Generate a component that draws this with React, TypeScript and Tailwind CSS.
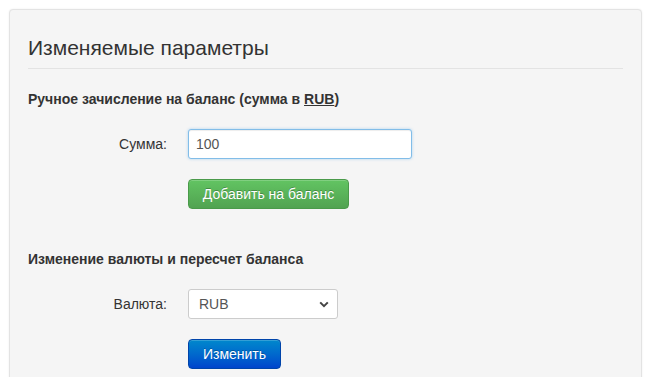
import { useState } from 'react';

function Chevron() {
  return (
    <svg width="10" height="7" viewBox="0 0 10 7" className="pointer-events-none absolute right-[9px] top-[12px]">
      <path d="M1.2 1.4 5 5.2 8.8 1.4" fill="none" stroke="#444" strokeWidth="2" />
    </svg>
  );
}

export default function App() {
  const [amount, setAmount] = useState('100');
  const [currency, setCurrency] = useState('RUB');

  return (
    <div className="h-screen overflow-hidden bg-white p-[9px] font-['Liberation_Sans',Arial,sans-serif] text-[14px] text-[#333]">
      <div className="h-[400px] rounded-[4px] border border-[#e3e3e3] bg-[#f5f5f5] px-[18px] pt-[18px] shadow-[0_0_2px_rgba(0,0,0,0.08)]">
        <h2 className="mt-[5px] text-[21px] leading-[30px] text-[#333]">Изменяемые параметры</h2>
        <div className="mt-[5px] h-px bg-[#e3e3e3]" />

        <h4 className="mt-[20px] text-[14px] font-bold leading-[20px]">
          Ручное зачисление на баланс (сумма в <span className="underline">RUB</span>)
        </h4>

        <div className="mt-[20px] flex items-center">
          <label className="w-[139px] text-right">Сумма:</label>
          <input
            value={amount}
            onChange={(e) => setAmount(e.target.value)}
            className="ml-[21px] h-[30px] w-[224px] rounded-[3px] border border-[#82bde8] bg-white px-[7px] text-[14px] text-[#555] shadow-[inset_0_1px_1px_rgba(0,0,0,0.075),0_0_3px_rgba(82,168,236,0.45)] outline-none"
          />
        </div>
        <div className="ml-[160px] mt-[20px]">
          <button className="h-[30px] w-[161px] rounded-[4px] border border-[#4a9a4a] bg-gradient-to-b from-[#62c462] to-[#51a351] text-[14px] text-white shadow-[inset_0_1px_0_rgba(255,255,255,0.2)] [text-shadow:0_-1px_0_rgba(0,0,0,0.25)]">
            Добавить на баланс
          </button>
        </div>

        <h4 className="mt-[40px] text-[14px] font-bold leading-[20px]">Изменение валюты и пересчет баланса</h4>

        <div className="mt-[20px] flex items-center">
          <label className="w-[139px] text-right">Валюта:</label>
          <div className="relative ml-[21px]">
            <select
              value={currency}
              onChange={(e) => setCurrency(e.target.value)}
              className="h-[30px] w-[150px] appearance-none rounded-[3px] border border-[#ccc] bg-white pl-[10px] text-[14px] text-[#555] outline-none"
            >
              <option>RUB</option>
              <option>USD</option>
              <option>EUR</option>
            </select>
            <Chevron />
          </div>
        </div>
        <div className="ml-[160px] mt-[20px]">
          <button className="h-[30px] w-[93px] rounded-[4px] border border-[#0044aa] bg-gradient-to-b from-[#0088cc] to-[#0044cc] text-[14px] text-white shadow-[inset_0_1px_0_rgba(255,255,255,0.2)] [text-shadow:0_-1px_0_rgba(0,0,0,0.25)]">
            Изменить
          </button>
        </div>
      </div>
    </div>
  );
}
